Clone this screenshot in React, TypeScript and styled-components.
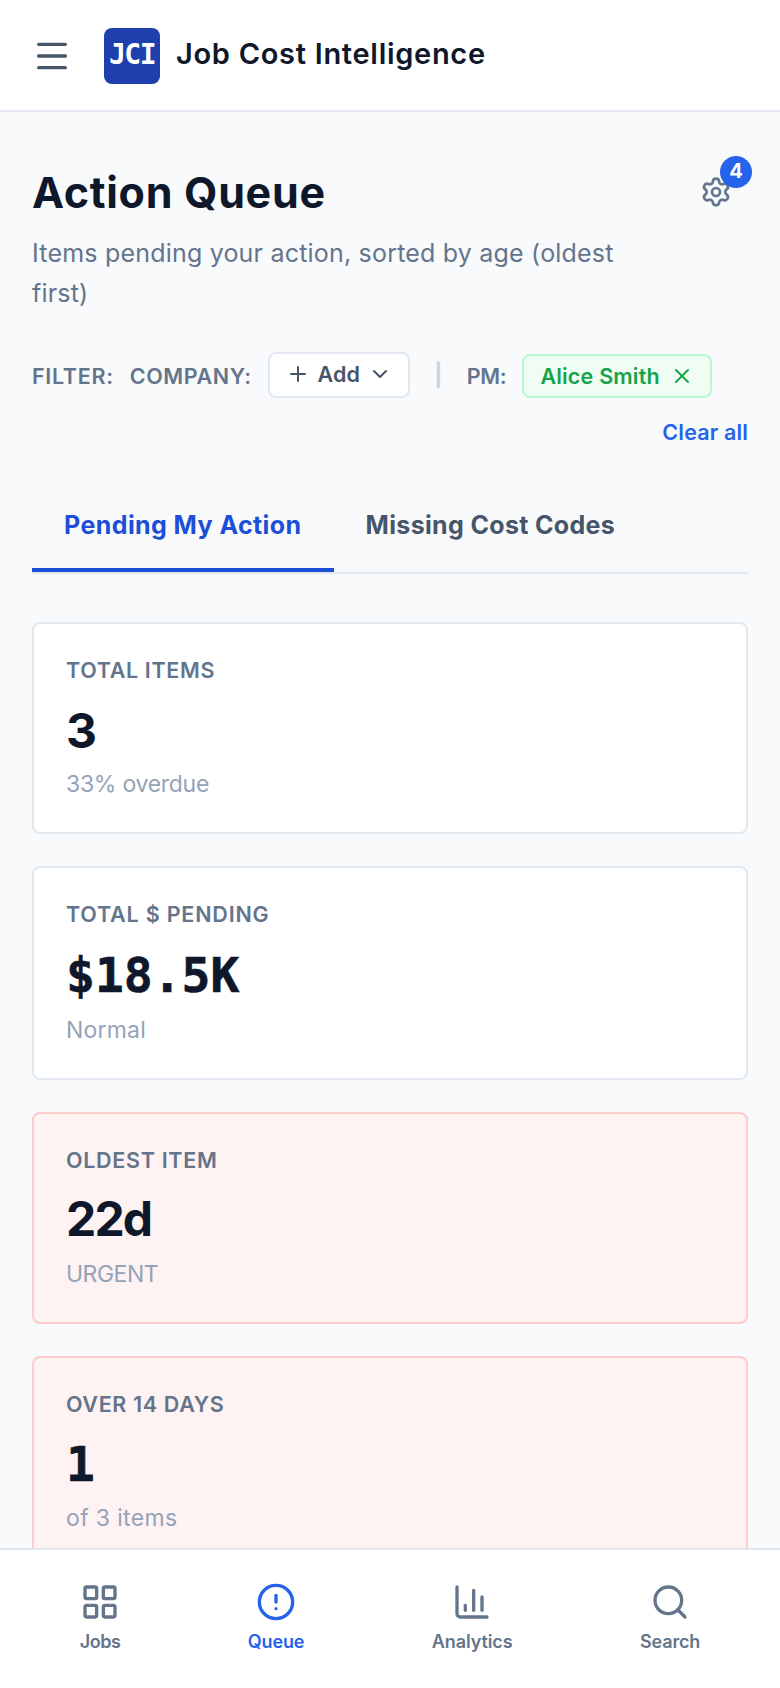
import React from 'react';
import styled, { createGlobalStyle } from 'styled-components';
import {
  ChartColumn,
  ChevronDown,
  CircleAlert,
  LayoutGrid,
  Menu,
  Plus,
  Search,
  Settings,
  X,
  type LucideIcon,
} from 'lucide-react';

const GlobalStyle = createGlobalStyle`
  *, *::before, *::after { box-sizing: border-box; }
  body {
    margin: 0;
    background: #f8fafc;
    color: #0f172a;
    font-family: Inter, 'Liberation Sans', sans-serif;
  }
  button {
    border: 0;
    padding: 0;
    background: none;
    font: inherit;
    color: inherit;
  }
  svg { display: block; flex: none; }
`;

const Screen = styled.div`
  display: flex;
  flex-direction: column;
  height: 1688px;
  overflow: hidden;
`;

const TopBar = styled.header`
  display: flex;
  flex: none;
  align-items: center;
  height: 112px;
  padding: 0 32px;
  border-bottom: 2px solid #e2e8f0;
  background: #fff;
`;

const MenuButton = styled.button`
  margin: 2px 32px 0 0;
  color: #475569;
`;

const Logo = styled.div`
  width: 56px;
  height: 56px;
  margin: 2px 16px 0 0;
  border-radius: 8px;
  background: #1e40af;
  color: #fff;
  font: 700 28px/54px 'DejaVu Sans Mono', monospace;
  letter-spacing: -1.5px;
  text-align: center;
`;

const Brand = styled.span`
  margin-bottom: 2px;
  font-size: 29px;
  font-weight: 600;
  line-height: 40px;
  letter-spacing: 0.7px;
  white-space: nowrap;
`;

const Main = styled.main`
  flex: 1;
  min-height: 0;
  padding: 56px 32px 0;
  overflow: hidden;
`;

const PageHead = styled.div`
  display: flex;
  justify-content: space-between;
  align-items: flex-start;
`;

const PageTitle = styled.h1`
  margin: 0 0 16px;
  font-size: 43px;
  font-weight: 700;
  line-height: 49px;
  letter-spacing: 0.7px;
`;

const Subtitle = styled.p`
  max-width: 620px;
  margin: 0;
  color: #64748b;
  font-size: 25px;
  line-height: 40px;
  letter-spacing: 0.2px;
`;

const SettingsButton = styled.button`
  position: relative;
  display: grid;
  place-items: center;
  flex: none;
  width: 64px;
  height: 64px;
  margin-top: -8px;
  color: #64748b;
`;

const Badge = styled.span`
  position: absolute;
  top: -4px;
  right: -4px;
  width: 32px;
  height: 32px;
  border-radius: 50%;
  background: #2563eb;
  color: #fff;
  font-size: 20px;
  font-weight: 700;
  line-height: 31px;
  text-align: center;
`;

const Filters = styled.div`
  display: flex;
  flex-wrap: wrap;
  align-items: center;
  gap: 18px 16px;
  margin-top: 39px;
  font-size: 21.5px;
  line-height: 32px;
  white-space: nowrap;
`;

const FilterLabel = styled.span<{ $spacing: number }>`
  margin-top: 2px;
  color: #64748b;
  font-weight: 600;
  letter-spacing: ${({ $spacing }) => $spacing}px;
`;

const AddButton = styled.button`
  display: flex;
  align-items: center;
  justify-content: space-between;
  width: 142px;
  height: 46px;
  padding: 0 16px 2px;
  border: 2px solid #e2e8f0;
  border-radius: 8px;
  background: #fff;
  color: #475569;
  font-weight: 600;
  letter-spacing: 0.1px;
`;

const Divider = styled.span`
  width: 25px;
  color: #cbd5e1;
  font-size: 22px;
  font-weight: 700;
  text-align: center;
`;

const Chip = styled.button`
  display: flex;
  align-items: center;
  align-self: flex-end;
  justify-content: space-between;
  width: 190px;
  height: 44px;
  padding: 0 16px;
  border: 2px solid #bbf7d0;
  border-radius: 8px;
  background: #f0fdf4;
  color: #16a34a;
  font-weight: 600;
  letter-spacing: 0.2px;
`;

const ClearAll = styled.button`
  margin-left: auto;
  color: #2563eb;
  font-weight: 600;
  letter-spacing: 0.15px;
`;

const Tabs = styled.div`
  display: flex;
  margin: 34px 0 48px;
  border-bottom: 2px solid #e2e8f0;
`;

const Tab = styled.button<{ $active?: boolean; $spacing: number }>`
  height: 90px;
  padding: 0 32px;
  border-bottom: 4px solid ${({ $active }) => ($active ? '#1d4ed8' : 'transparent')};
  color: ${({ $active }) => ($active ? '#1d4ed8' : '#475569')};
  font-size: 25px;
  font-weight: 650;
  letter-spacing: ${({ $spacing }) => $spacing}px;
`;

const Cards = styled.section`
  display: flex;
  flex-direction: column;
  gap: 32px;
`;

const Card = styled.article<{ $urgent?: boolean; $tall?: boolean }>`
  height: ${({ $tall }) => ($tall ? 214 : 212)}px;
  padding: 30px 32px;
  border: 2px solid ${({ $urgent }) => ($urgent ? '#fecaca' : '#e2e8f0')};
  border-radius: 8px;
  background: ${({ $urgent }) => ($urgent ? '#fef2f2' : '#fff')};
`;

const CardLabel = styled.div<{ $spacing: number }>`
  color: #64748b;
  font-size: 21.5px;
  font-weight: 570;
  line-height: 32px;
  letter-spacing: ${({ $spacing }) => $spacing}px;
`;

const CardValue = styled.div<{ $mono?: boolean; $top: number; $bottom: number }>`
  margin: ${({ $top }) => $top}px 0 ${({ $bottom }) => $bottom}px;
  font-family: ${({ $mono }) =>
    $mono ? "'DejaVu Sans Mono', monospace" : "Inter, 'Liberation Sans', sans-serif"};
  font-size: 48px;
  font-weight: 700;
  line-height: 56px;
  letter-spacing: ${({ $mono }) => ($mono ? 0 : -1.8)}px;
  -webkit-text-stroke: ${({ $mono }) => ($mono ? 0.6 : 0)}px currentColor;
`;

const CardNote = styled.div<{ $spacing: number }>`
  color: #94a3b8;
  font-size: 23px;
  line-height: 36px;
  letter-spacing: ${({ $spacing }) => $spacing}px;
`;

const BottomNav = styled.nav`
  display: flex;
  flex: none;
  justify-content: space-around;
  height: 140px;
  padding: 32px 16px 0;
  border-top: 2px solid #e2e8f0;
  background: #fff;
`;

const NavItem = styled.button<{ $active?: boolean; $spacing: number }>`
  display: flex;
  flex-direction: column;
  align-items: center;
  gap: 8px;
  color: ${({ $active }) => ($active ? '#2563eb' : '#64748b')};
  font-size: 18px;
  font-weight: 600;
  line-height: 24px;
  letter-spacing: ${({ $spacing }) => $spacing}px;
`;

type Stat = {
  label: string;
  value: string;
  note: string;
  labelSpacing: number;
  noteSpacing: number;
  top: number;
  bottom: number;
  mono?: boolean;
  tall?: boolean;
  urgent?: boolean;
};

const stats: Stat[] = [
  { label: 'TOTAL ITEMS', value: '3', note: '33% overdue', labelSpacing: 0.66, noteSpacing: -0.27, top: 17, bottom: 7 },
  { label: 'TOTAL $ PENDING', value: '$18.5K', note: 'Normal', labelSpacing: 0.8, noteSpacing: 0.2, top: 17, bottom: 9, mono: true, tall: true },
  { label: 'OLDEST ITEM', value: '22d', note: 'URGENT', labelSpacing: 0.7, noteSpacing: -0.5, top: 15, bottom: 9, urgent: true },
  { label: 'OVER 14 DAYS', value: '1', note: 'of 3 items', labelSpacing: 0.65, noteSpacing: 0.35, top: 16, bottom: 8, mono: true, urgent: true },
];

const navItems: { label: string; icon: LucideIcon; spacing: number; active?: boolean }[] = [
  { label: 'Jobs', icon: LayoutGrid, spacing: -0.5 },
  { label: 'Queue', icon: CircleAlert, spacing: -0.15, active: true },
  { label: 'Analytics', icon: ChartColumn, spacing: -0.1 },
  { label: 'Search', icon: Search, spacing: -0.15 },
];

export default function App() {
  return (
    <>
      <GlobalStyle />
      <Screen>
        <TopBar>
          <MenuButton aria-label="Menu"><Menu size={40} /></MenuButton>
          <Logo>JCI</Logo>
          <Brand>Job Cost Intelligence</Brand>
        </TopBar>
        <Main>
          <PageHead>
            <div>
              <PageTitle>Action Queue</PageTitle>
              <Subtitle>Items pending your action, sorted by age (oldest first)</Subtitle>
            </div>
            <SettingsButton aria-label="Settings">
              <Settings size={32} />
              <Badge>4</Badge>
            </SettingsButton>
          </PageHead>
          <Filters>
            <FilterLabel $spacing={0.7}>FILTER:</FilterLabel>
            <FilterLabel $spacing={0.6}>COMPANY:</FilterLabel>
            <AddButton><Plus size={24} />Add<ChevronDown size={24} /></AddButton>
            <Divider>|</Divider>
            <FilterLabel $spacing={-0.3}>PM:</FilterLabel>
            <Chip>Alice Smith<X size={24} /></Chip>
            <ClearAll>Clear all</ClearAll>
          </Filters>
          <Tabs>
            <Tab $active $spacing={0.42}>Pending My Action</Tab>
            <Tab $spacing={0.34}>Missing Cost Codes</Tab>
          </Tabs>
          <Cards>
            {stats.map((s) => (
              <Card key={s.label} $urgent={s.urgent} $tall={s.tall}>
                <CardLabel $spacing={s.labelSpacing}>{s.label}</CardLabel>
                <CardValue $mono={s.mono} $top={s.top} $bottom={s.bottom}>{s.value}</CardValue>
                <CardNote $spacing={s.noteSpacing}>{s.note}</CardNote>
              </Card>
            ))}
          </Cards>
        </Main>
        <BottomNav>
          {navItems.map(({ label, icon: Icon, spacing, active }) => (
            <NavItem key={label} $active={active} $spacing={spacing}>
              <Icon size={40} />
              {label}
            </NavItem>
          ))}
        </BottomNav>
      </Screen>
    </>
  );
}
